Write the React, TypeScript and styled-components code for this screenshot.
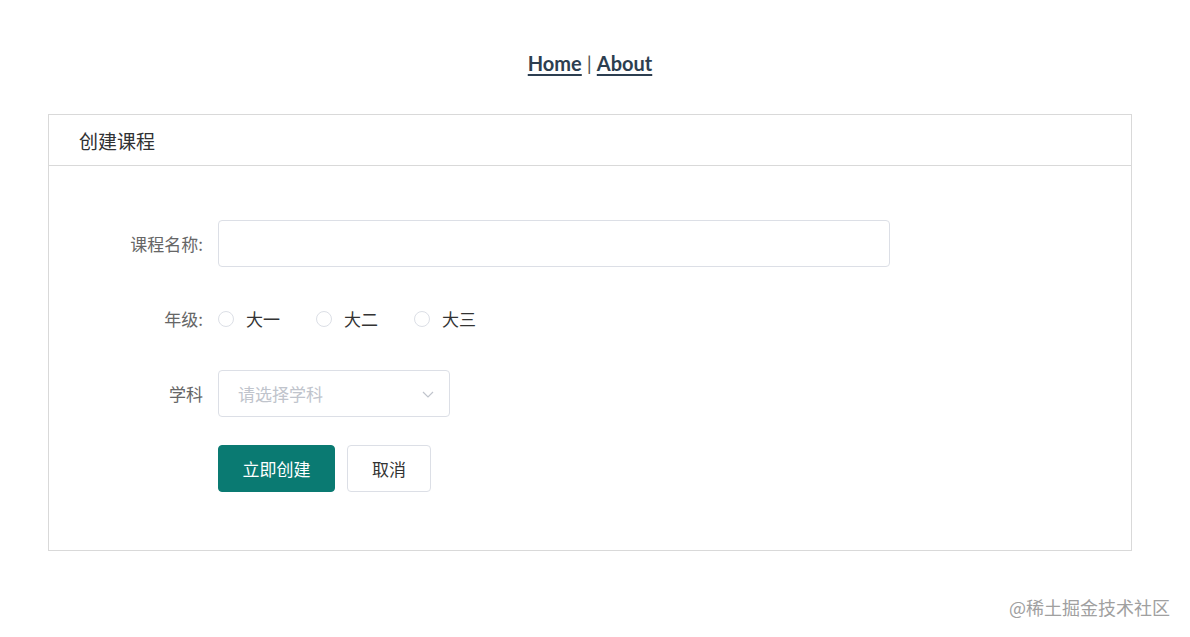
import React from "react";
import styled, { createGlobalStyle } from "styled-components";

const Global = createGlobalStyle`
  html, body { margin: 0; padding: 0; background: #fff; }
  body { font-family: Lato, "Noto Sans CJK SC", sans-serif; }
`;

const Page = styled.div`
  width: 1180px;
  padding-top: 48px;
  position: relative;
  height: 637px;
  box-sizing: border-box;
`;

const Nav = styled.nav`
  text-align: center;
  font-family: Lato, "Noto Sans CJK SC", sans-serif;
  font-weight: 700;
  font-size: 20px;
  line-height: 30px;
  color: #2c3e50;
  height: 30px;
`;

const NavLink = styled.a`
  color: #2c3e50;
  text-decoration: underline;
  text-underline-offset: 3px;
  text-decoration-thickness: 2px;
`;

const Sep = styled.span`
  font-weight: 400;
  margin: 0 5px;
  color: #555;
`;

const Card = styled.section`
  margin: 36px 48px 0;
  border: 1px solid #d9d9d9;
  font-family: "Noto Sans CJK SC", sans-serif;
`;

const CardHeader = styled.div`
  height: 50px;
  border-bottom: 1px solid #d9d9d9;
  display: flex;
  align-items: center;
  padding-left: 30px;
  font-size: 19px;
  color: #303133;
`;

const CardBody = styled.div`
  padding: 54px 0 58px;
  display: flex;
  flex-direction: column;
  gap: 28px;
`;

const Row = styled.div`
  display: flex;
  align-items: center;
  height: 47px;
`;

const Label = styled.label`
  width: 169px;
  box-sizing: border-box;
  padding-right: 15px;
  text-align: right;
  font-size: 17px;
  color: #666;
`;

const TextInput = styled.input`
  width: 672px;
  height: 47px;
  box-sizing: border-box;
  border: 1px solid #dcdfe6;
  border-radius: 4px;
  outline: none;
  padding: 0 15px;
  font-size: 17px;
`;

const RadioGroup = styled.div`
  display: flex;
  align-items: center;
  gap: 36px;
`;

const RadioItem = styled.label`
  display: flex;
  align-items: center;
  gap: 12px;
  font-size: 17px;
  color: #333;
`;

const RadioCircle = styled.span`
  width: 16px;
  height: 16px;
  box-sizing: border-box;
  border: 1px solid #dcdfe6;
  border-radius: 50%;
  background: #fff;
`;

const Select = styled.div`
  width: 232px;
  height: 47px;
  box-sizing: border-box;
  border: 1px solid #dcdfe6;
  border-radius: 4px;
  display: flex;
  align-items: center;
  justify-content: space-between;
  padding: 0 14px 0 19px;
  font-size: 17px;
  color: #c0c4cc;
`;

const ButtonRow = styled.div`
  display: flex;
  align-items: center;
  gap: 12px;
  padding-left: 169px;
`;

const Button = styled.button<{ $primary?: boolean }>`
  height: 47px;
  box-sizing: border-box;
  border-radius: 4px;
  font-family: "Noto Sans CJK SC", sans-serif;
  font-size: 17px;
  padding: 0;
  width: ${(p) => (p.$primary ? "117px" : "84px")};
  background: ${(p) => (p.$primary ? "#0a7a72" : "#fff")};
  color: ${(p) => (p.$primary ? "#fff" : "#333")};
  border: 1px solid ${(p) => (p.$primary ? "#0a7a72" : "#dcdfe6")};
  cursor: pointer;
`;

const Watermark = styled.div`
  position: absolute;
  right: 10px;
  top: 594px;
  font-family: "Noto Sans CJK SC", sans-serif;
  font-size: 18px;
  color: #a0a0a0;
`;

const Chevron = () => (
  <svg width="14" height="14" viewBox="0 0 14 14" fill="none">
    <path d="M2 5l5 5 5-5" stroke="#c0c4cc" strokeWidth="1.2" />
  </svg>
);

export default function App() {
  return (
    <>
      <Global />
      <Page>
        <Nav>
          <NavLink>Home</NavLink>
          <Sep>|</Sep>
          <NavLink>About</NavLink>
        </Nav>
        <Card>
          <CardHeader>创建课程</CardHeader>
          <CardBody>
            <Row>
              <Label>课程名称:</Label>
              <TextInput />
            </Row>
            <Row>
              <Label>年级:</Label>
              <RadioGroup>
                {["大一", "大二", "大三"].map((g) => (
                  <RadioItem key={g}>
                    <RadioCircle />
                    {g}
                  </RadioItem>
                ))}
              </RadioGroup>
            </Row>
            <Row>
              <Label>学科</Label>
              <Select>
                <span>请选择学科</span>
                <Chevron />
              </Select>
            </Row>
            <ButtonRow>
              <Button $primary>立即创建</Button>
              <Button>取消</Button>
            </ButtonRow>
          </CardBody>
        </Card>
        <Watermark>@稀土掘金技术社区</Watermark>
      </Page>
    </>
  );
}
